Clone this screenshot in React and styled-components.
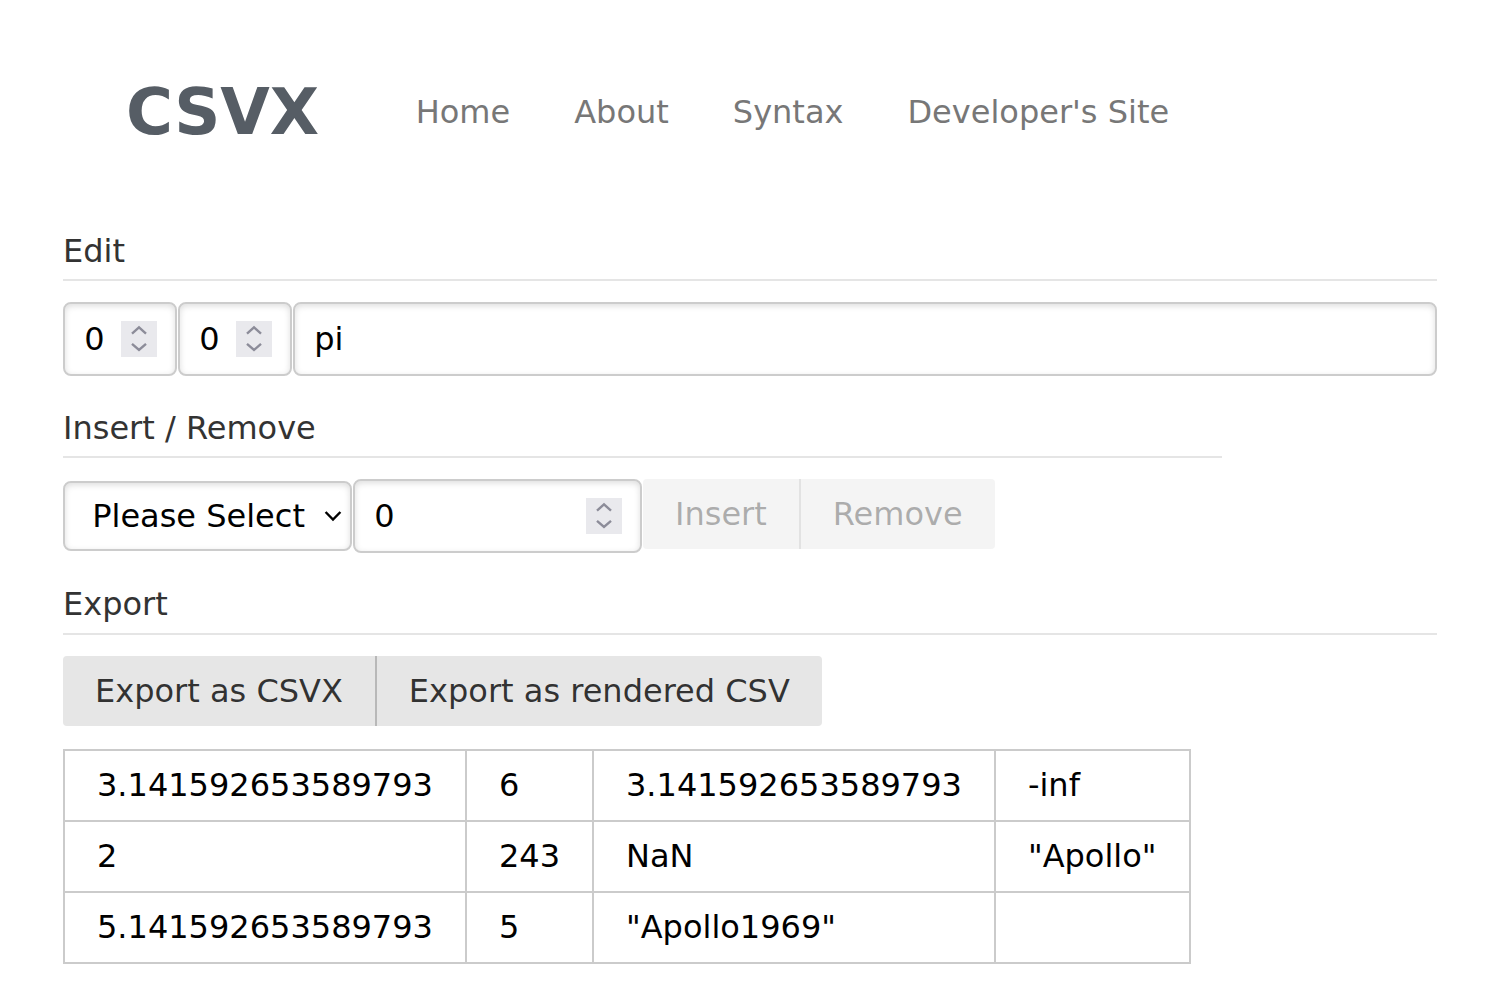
import React from 'react'
import styled, { createGlobalStyle } from 'styled-components'

const GlobalStyle = createGlobalStyle`
  body {
    margin: 0;
    background: #fff;
    color: #000;
    font-family: "DejaVu Sans", sans-serif;
  }
`

// the page is laid out at 1x and zoomed, like the original at 200%
const Page = styled.div`
  zoom: 2;
  font-size: 16px;
  line-height: normal;
`

const Header = styled.header`
  display: flex;
  align-items: center;
  padding: 37.3px 0 36.8px 63px;
`

const Brand = styled.a`
  font-size: 32px;
  font-weight: bold;
  color: #565d65;
  text-decoration: none;
  margin-right: 32.3px;
`

const NavLink = styled.a`
  color: #777;
  padding: 8px 16px;
  text-decoration: none;
`

const Main = styled.main`
  padding: 0 31.5px;
`

const Section = styled.section`
  margin-bottom: 11.3px;
`

const Legend = styled.div`
  width: ${p => p.width || '100%'};
  color: #333;
  padding: 4.8px 0;
  border-bottom: 1px solid #e5e5e5;
  margin-bottom: 10.5px;
`

const Row = styled.div`
  display: flex;
  align-items: center;
  gap: 0.5px;
`

const Field = styled.span`
  position: relative;
  display: flex;
  flex: ${p => (p.grow ? 1 : 'none')};
  width: ${p => p.width || 'auto'};
`

const Input = styled.input`
  box-sizing: border-box;
  width: 100%;
  min-width: 0;
  margin: 0;
  padding: 8px 9.6px;
  font-family: "DejaVu Sans", sans-serif;
  font-size: 16px;
  line-height: normal;
  color: #000;
  background: #fff;
  border: 1px solid #ccc;
  border-radius: 4px;
  box-shadow: inset 0 1px 3px #ddd;
  outline: none;
  -moz-appearance: textfield;

  &::-webkit-inner-spin-button,
  &::-webkit-outer-spin-button {
    -webkit-appearance: none;
    margin: 0;
  }
`

const Spinner = styled.svg`
  position: absolute;
  right: 10px;
  top: 50%;
  width: 18px;
  height: 18px;
  margin-top: -9px;
  pointer-events: none;
`

const Chevron = styled.svg`
  position: absolute;
  right: 5px;
  top: 50%;
  width: 9px;
  height: 6px;
  margin-top: -3px;
  pointer-events: none;
`

const Select = styled.select`
  box-sizing: border-box;
  width: 144.5px;
  height: 35px;
  margin: 0;
  padding: 0 20px 0 13.6px;
  font-family: "DejaVu Sans", sans-serif;
  font-size: 16px;
  color: #000;
  background: #fff;
  border: 1px solid #ccc;
  border-radius: 4px;
  box-shadow: inset 0 1px 3px #ddd;
  outline: none;
  appearance: none;
  -webkit-appearance: none;
`

const ButtonGroup = styled.div`
  display: flex;
  align-self: flex-start;
`

const Button = styled.button`
  margin: 0;
  padding: 8px 16px;
  font-family: "DejaVu Sans", sans-serif;
  font-size: 16px;
  line-height: normal;
  color: rgba(0, 0, 0, 0.8);
  background: #e6e6e6;
  border: none;
  border-right: 1px solid rgba(0, 0, 0, 0.2);
  border-radius: 0;
  cursor: pointer;

  &:first-child {
    border-radius: 2px 0 0 2px;
  }
  &:last-child {
    border-right: none;
    border-radius: 0 2px 2px 0;
  }
  &:disabled {
    opacity: 0.4;
    cursor: not-allowed;
  }
`

const Table = styled.table`
  border-collapse: collapse;
  border-spacing: 0;
  empty-cells: show;
  border: 1px solid #cbcbcb;
  font-size: 16px;
`

const Cell = styled.td`
  padding: 7.75px 16px;
  border: 1px solid #cbcbcb;
  color: #000;
  line-height: normal;
`

const rows = [
  ['3.141592653589793', '6', '3.141592653589793', '-inf'],
  ['2', '243', 'NaN', '"Apollo"'],
  ['5.141592653589793', '5', '"Apollo1969"', ''],
]

function NumberField({ width, value }) {
  return (
    <Field width={width}>
      <Input type="number" defaultValue={value} />
      <Spinner viewBox="0 0 18 18">
        <rect width="18" height="18" fill="#e9e9ed" />
        <path d="M5.5 6.3 L9 3.2 L12.5 6.3" fill="none" stroke="#8c8c99" strokeWidth="1.2" />
        <path d="M5.5 11.4 L9 14.5 L12.5 11.4" fill="none" stroke="#8c8c99" strokeWidth="1.2" />
      </Spinner>
    </Field>
  )
}

export default function App() {
  return (
    <Page>
      <GlobalStyle />
      <Header>
        <Brand href="#">CSVX</Brand>
        <NavLink href="#">Home</NavLink>
        <NavLink href="#">About</NavLink>
        <NavLink href="#">Syntax</NavLink>
        <NavLink href="#">Developer's Site</NavLink>
      </Header>

      <Main>
        <Section>
          <Legend>Edit</Legend>
          <Row>
            <NumberField width="57px" value={0} />
            <NumberField width="57px" value={0} />
            <Field grow>
              <Input type="text" defaultValue="pi" />
            </Field>
          </Row>
        </Section>

        <Section>
          <Legend width="579.5px">Insert / Remove</Legend>
          <Row>
            <Field>
              <Select defaultValue="">
                <option value="">Please Select</option>
                <option value="row">Row</option>
                <option value="column">Column</option>
              </Select>
              <Chevron viewBox="0 0 9 6">
                <path d="M0.8 1 L4.5 4.8 L8.2 1" fill="none" stroke="#000" strokeWidth="1.2" />
              </Chevron>
            </Field>
            <NumberField width="144.5px" value={0} />
            <ButtonGroup>
              <Button disabled>Insert</Button>
              <Button disabled>Remove</Button>
            </ButtonGroup>
          </Row>
        </Section>

        <Section>
          <Legend>Export</Legend>
          <ButtonGroup>
            <Button>Export as CSVX</Button>
            <Button>Export as rendered CSV</Button>
          </ButtonGroup>
        </Section>

        <Table>
          <tbody>
            {rows.map((r, i) => (
              <tr key={i}>
                {r.map((c, j) => (
                  <Cell key={j}>{c}</Cell>
                ))}
              </tr>
            ))}
          </tbody>
        </Table>
      </Main>
    </Page>
  )
}
